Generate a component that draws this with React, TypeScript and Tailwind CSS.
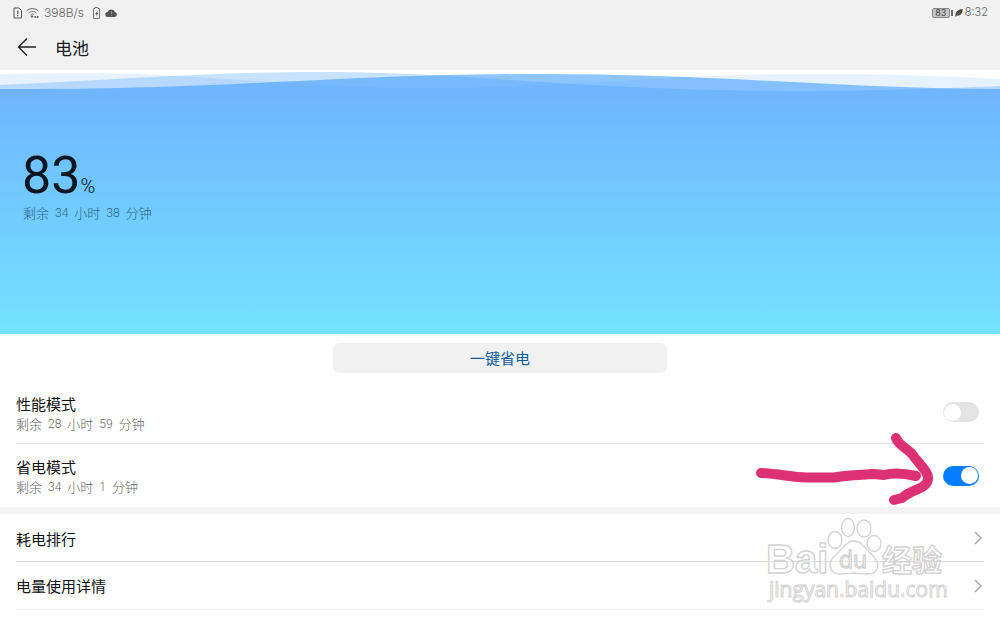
import React, { useState } from 'react';

interface IDurationProps {
  hours: number;
  minutes: number;
  className?: string;
}

interface IModeRowProps {
  id: string;
  title: string;
  hours: number;
  minutes: number;
  checked: boolean;
  onChange: (value: boolean) => void;
  children?: React.ReactNode;
}

function StatusBar(): React.ReactElement {
  return (
    <div className="flex items-center justify-between h-6 px-3 pt-px font-['Inter','Liberation_Sans',sans-serif] text-xs font-light text-[#666]">
      <div className="flex items-center">
        {/* SIM alert */}
        <svg width="11" height="12" viewBox="0 0 11 12" fill="none" stroke="#555" aria-hidden="true">
          <path d="M2 1h5l2.500 2.500v7.500H2z" />
          <path d="M5.700 3.500v3.500M5.700 8v1.300" strokeWidth="1.2" />
        </svg>
        {/* Wi-Fi */}
        <svg className="ml-[3px]" width="13" height="12" viewBox="0 0 13 12" fill="none" stroke="#666" aria-hidden="true">
          <path d="M.5 4C4 .8 9 .8 12.500 4M2.500 6C5 4 8 4 10.500 6M4.500 8C5.700 7 7 7 8 7.600" />
          <circle cx="6" cy="9.500" r=".8" fill="#555" />
          <path d="M8.500 10h1.500M11 10h1.500" strokeWidth="2" />
        </svg>
        <span className="ml-[5px] w-10 whitespace-nowrap">398B/s</span>
        {/* Charging battery */}
        <svg className="ml-2" width="9" height="12" viewBox="0 0 9 12" fill="none" stroke="#777" aria-hidden="true">
          <path d="M3 1.500V.5h3v1h1.500v10h-6v-10z" />
          <path d="M6 4L3 6.800h1.500L4 9l2.500-3H5z" fill="#444" stroke="none" />
        </svg>
        {/* Cloud */}
        <svg className="ml-1" width="13" height="12" viewBox="0 0 13 12" aria-hidden="true">
          <path d="M3 10a2.500 2.500 0 01-.4-5A4 4 0 0110 5a2.600 2.600 0 010 5z" fill="#555" />
          <path d="M6.500 4v3M6.500 8v1" stroke="#999" />
        </svg>
      </div>
      <div className="flex items-center">
        <span className="flex items-center justify-center w-[18px] h-[10px] rounded-xs border border-[#888] bg-[#c4c4c4] text-[9px] leading-none font-normal text-[#444]">
          83
        </span>
        <span className="ml-px w-0.5 h-1.5 bg-[#666]" />
        <svg className="ml-0.5" width="8" height="10" viewBox="0 0 9 10" aria-hidden="true">
          <path d="M.5 9.500C0 4 3 1 8.500 .5 9 5 6 8.500 2 8z" fill="#444" />
          <path d="M1 9L6 3.500" stroke="#aaa" strokeWidth=".6" />
        </svg>
        <span className="ml-0.5 text-[11px]">8:32</span>
      </div>
    </div>
  );
}

function Duration({ hours, minutes, className }: IDurationProps): React.ReactElement {
  return (
    <div className={['flex items-center gap-1.5 text-[13px] leading-5 font-light', className].join(' ')}>
      <span>剩余</span>
      <span className="font-['Roboto','Liberation_Sans',sans-serif] text-xs">{hours}</span>
      <span>小时</span>
      <span className="font-['Roboto','Liberation_Sans',sans-serif] text-xs">{minutes}</span>
      <span>分钟</span>
    </div>
  );
}

function BatteryHero(): React.ReactElement {
  return (
    <section>
      <svg className="block w-full h-[22px]" viewBox="0 0 1000 22" preserveAspectRatio="none" fill="#3c9bff" aria-hidden="true">
        <path fillOpacity=".13" d="M0 4C60 3 120 3 160 5C250 9 320 18 430 18C580 18 650 4 820 4C900 4 960 7 1000 9V22H0z" />
        <path fillOpacity=".28" d="M0 15C100 11 200 2 320 2C480 2 560 20 800 21C880 21 950 18 1000 16V22H0z" />
        <path fillOpacity=".58" d="M0 19C240 20 330 4 540 4C720 4 850 19 1000 19V22H0z" />
      </svg>
      <div className="h-[242px] pl-[22px] pr-6 pt-[57px] bg-linear-to-b from-[#6fb5ff] to-[#73e2ff]">
        <p className="flex items-baseline h-[54px] font-['Roboto','Noto_Sans',sans-serif] text-[#0b1620]">
          <span className="text-[52px] leading-[54px]">83</span>
          <span className="text-xl font-light">%</span>
        </p>
        <Duration hours={34} minutes={38} className="pl-px text-[#2f6585]" />
      </div>
    </section>
  );
}

function ModeRow({ id, title, hours, minutes, checked, onChange, children }: IModeRowProps): React.ReactElement {
  return (
    <div className="relative flex items-center justify-between h-[63px]">
      <label htmlFor={id} className="pt-0.5">
        <span className="block text-[15px] leading-[21px] text-[#111]">{title}</span>
        <Duration hours={hours} minutes={minutes} className="text-[#666]" />
      </label>
      {children}
      <input
        id={id}
        type="checkbox"
        role="switch"
        checked={checked}
        onChange={(e) => onChange(e.target.checked)}
        className="appearance-none flex items-center w-9 h-5 mr-[5px] rounded-full p-px bg-[#e4e4e4] checked:bg-[#057dff] checked:justify-end before:block before:size-[17px] before:rounded-full before:bg-white before:content-['']"
      />
    </div>
  );
}

function LinkRow({ label }: { label: string }): React.ReactElement {
  return (
    <a href="#" className="flex items-center justify-between h-[47px] text-[15px] text-[#111]">
      <span className="pt-0.5">{label}</span>
      <svg className="mr-0.5" width="8" height="14" viewBox="0 0 8 14" fill="none" stroke="#a5a5a5" strokeWidth="1.3" aria-hidden="true">
        <path d="M1 1l6 6-6 6" />
      </svg>
    </a>
  );
}

// Hand-drawn arrow pointing at the power saving switch
function MarkerArrow(): React.ReactElement {
  return (
    <svg
      className="absolute right-[49px] -top-3 pointer-events-none"
      width="181"
      height="74"
      viewBox="0 0 181 74"
      fill="none"
      stroke="#dc3275"
      strokeWidth="10"
      strokeLinecap="round"
      strokeLinejoin="round"
      aria-hidden="true"
    >
      <path d="M7 41C25 42 38 45 52 45.500H80C92 43 105 43 120 42L130 43C142 40 153 42 162 44" />
      <path d="M142 6C145 14 153 16 158 22C165 32 175 40 174 47C173 57 158 57 148 66L140 68" />
    </svg>
  );
}

function Watermark(): React.ReactElement {
  return (
    <svg
      className="absolute right-12 top-0.5 pointer-events-none"
      width="186"
      height="90"
      viewBox="0 0 186 90"
      fill="#fff"
      fillOpacity=".4"
      stroke="#d2d2d2"
      strokeWidth="1.300"
      aria-hidden="true"
    >
      <ellipse cx="69" cy="24" rx="7" ry="8.500" />
      <ellipse cx="82" cy="11.500" rx="6.500" ry="9" />
      <ellipse cx="98" cy="12.500" rx="7" ry="8.500" />
      <ellipse cx="108" cy="27.500" rx="7" ry="8" />
      <path d="M88 25C95 25 98 31 103 36C109 41 114 47 111 53C108 60 99 58 88 57C77 58 68 60 65 53C62 46 67 41 73 36C78 31 81 25 88 25z" />
      <text x="0" y="57" fontFamily="'Liberation Sans', sans-serif" fontSize="40" fontWeight="700">Bai</text>
      <text x="73" y="52" fontFamily="'Open Sans', sans-serif" fontSize="23" fontWeight="400">du</text>
      <text x="116" y="55" fontFamily="'Noto Sans CJK SC', sans-serif" fontSize="30" fontWeight="700">经验</text>
      <text x="3" y="81" fontFamily="'Open Sans', 'Liberation Sans', sans-serif" fontSize="21" strokeWidth="1">jingyan.baidu.com</text>
    </svg>
  );
}

export default function App(): React.ReactElement {
  const [performance, setPerformance] = useState(false);
  const [powerSaving, setPowerSaving] = useState(true);

  return (
    <div className="min-h-screen bg-white font-['Noto_Sans_CJK_SC',sans-serif]">
      <header className="bg-[#f1f1f1]">
        <StatusBar />
        <div className="flex items-center h-[46px] pl-[17px]">
          <button type="button" aria-label="返回">
            <svg width="20" height="20" viewBox="0 0 20 20" fill="none" stroke="#222" strokeWidth="1.400" aria-hidden="true">
              <path d="M19 10H2M10 1.500L1.500 10l8.500 8.500" />
            </svg>
          </button>
          <h1 className="ml-[18px] pt-0.5 text-[17px] text-[#1a1a1a]">电池</h1>
        </div>
      </header>

      <main>
        <BatteryHero />

        <div className="flex justify-center pt-[9px] pb-2">
          <button type="button" className="w-1/3 h-[30px] rounded-md bg-[#f1f1f1] text-[15px] leading-[30px] text-[#0b5c9b]">
            一键省电
          </button>
        </div>

        <section className="px-4 border-b-[7px] border-[#f3f3f3] divide-y divide-[#e6e6e6]">
          <ModeRow id="performance" title="性能模式" hours={28} minutes={59} checked={performance} onChange={setPerformance} />
          <ModeRow id="power-saving" title="省电模式" hours={34} minutes={1} checked={powerSaving} onChange={setPowerSaving}>
            <MarkerArrow />
          </ModeRow>
        </section>

        <section className="relative px-4 pt-px">
          <nav className="border-b border-[#f0f0f0] divide-y divide-[#d9d9d9]">
            <LinkRow label="耗电排行" />
            <LinkRow label="电量使用详情" />
          </nav>
          <Watermark />
        </section>
      </main>
    </div>
  );
}
